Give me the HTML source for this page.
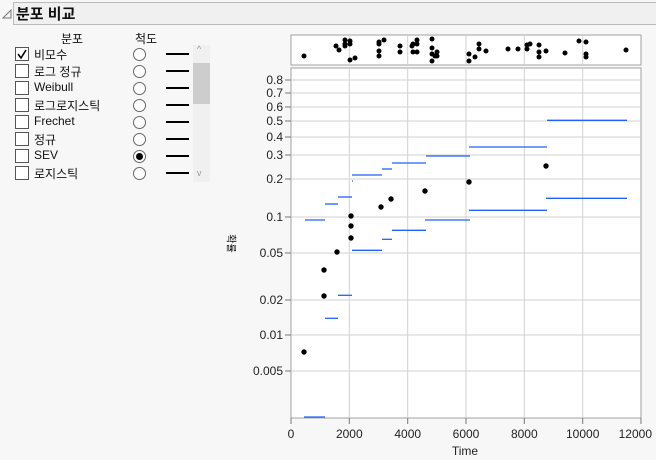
<!DOCTYPE html>
<html><head><meta charset="utf-8"><style>
body{margin:0;width:656px;height:460px;background:#f7f7f7;font-family:"Liberation Sans","Noto Sans CJK KR",sans-serif;overflow:hidden;position:relative}
.t{position:absolute;font-size:12px;color:#111;white-space:nowrap}
.cb{position:absolute;left:15px;width:12px;height:12px;border:1px solid #555;background:#fff}
.rd{position:absolute;left:133px;width:11px;height:11px;border:1px solid #666;border-radius:50%;background:#fff}
.ln{position:absolute;left:166px;width:23px;height:2px;background:#000}
</style></head><body>
<div style="position:absolute;left:13px;top:2px;width:660px;height:21px;border:1px solid #bbb;background:#f0f0f0"></div>
<svg style="position:absolute;left:2px;top:9px" width="10" height="10"><path d="M1 9 L9 9 L9 1 Z" fill="none" stroke="#777"/></svg>
<div class="t" style="left:16px;top:3px;font-size:15px;font-weight:bold">분포 비교</div>
<div class="t" style="left:61px;top:30px">분포</div>
<div class="t" style="left:135px;top:30px">척도</div>

<div class="cb" style="top:47px"></div><svg style="position:absolute;left:16px;top:48px" width="12" height="12"><path d="M2 6 L5 10 L10 2" fill="none" stroke="#000" stroke-width="1.6"/></svg>
<div class="t" style="left:34px;top:46px">비모수</div>
<div class="cb" style="top:64px"></div><div class="t" style="left:34px;top:63px">로그 정규</div>
<div class="cb" style="top:81px"></div><div class="t" style="left:34px;top:80px">Weibull</div>
<div class="cb" style="top:98px"></div><div class="t" style="left:34px;top:97px">로그로지스틱</div>
<div class="cb" style="top:115px"></div><div class="t" style="left:34px;top:114px">Frechet</div>
<div class="cb" style="top:132px"></div><div class="t" style="left:34px;top:131px">정규</div>
<div class="cb" style="top:149px"></div><div class="t" style="left:34px;top:148px">SEV</div>
<div class="cb" style="top:166px"></div><div class="t" style="left:34px;top:165px">로지스틱</div>

<div class="rd" style="top:48px"></div><div class="rd" style="top:65px"></div><div class="rd" style="top:82px"></div><div class="rd" style="top:99px"></div><div class="rd" style="top:116px"></div><div class="rd" style="top:133px"></div><div class="rd" style="top:150px"></div><div class="rd" style="top:167px"></div>
<div style="position:absolute;left:136px;top:153px;width:7px;height:7px;border-radius:50%;background:#000"></div>
<div class="ln" style="top:53px"></div><div class="ln" style="top:70px"></div><div class="ln" style="top:87px"></div><div class="ln" style="top:104px"></div><div class="ln" style="top:121px"></div><div class="ln" style="top:138px"></div><div class="ln" style="top:155px"></div><div class="ln" style="top:172px"></div>
<div style="position:absolute;left:193px;top:45px;width:17px;height:137px;background:#f0f0f0"></div>
<div style="position:absolute;left:193px;top:63px;width:17px;height:41px;background:#cdcdcd"></div>
<div class="t" style="left:197px;top:44px;font-size:9px;color:#999">^</div>
<div class="t" style="left:197px;top:168px;font-size:9px;color:#999">v</div>

<div class="t" style="left:223px;top:236px;transform:rotate(90deg);font-size:10px">확률</div>

<svg style="position:absolute;left:0;top:0" width="656" height="460" font-family="Liberation Sans" font-size="12">
<rect x="291" y="35" width="350" height="30" fill="#fff" stroke="#a0a0a0"/>
<rect x="291" y="68" width="350" height="350" fill="#fff" stroke="#a0a0a0"/>
<g stroke="#d0d0d0">
<line x1="349.3" y1="35" x2="349.3" y2="65"/><line x1="407.7" y1="35" x2="407.7" y2="65"/><line x1="466" y1="35" x2="466" y2="65"/><line x1="524.3" y1="35" x2="524.3" y2="65"/><line x1="582.7" y1="35" x2="582.7" y2="65"/>
<line x1="349.3" y1="68" x2="349.3" y2="418"/><line x1="407.7" y1="68" x2="407.7" y2="418"/><line x1="466" y1="68" x2="466" y2="418"/><line x1="524.3" y1="68" x2="524.3" y2="418"/><line x1="582.7" y1="68" x2="582.7" y2="418"/>
<line x1="291" y1="80" x2="641" y2="80"/><line x1="291" y1="93" x2="641" y2="93"/><line x1="291" y1="107" x2="641" y2="107"/><line x1="291" y1="121" x2="641" y2="121"/><line x1="291" y1="137" x2="641" y2="137"/><line x1="291" y1="155" x2="641" y2="155"/><line x1="291" y1="179" x2="641" y2="179"/><line x1="291" y1="217" x2="641" y2="217"/><line x1="291" y1="253" x2="641" y2="253"/><line x1="291" y1="300" x2="641" y2="300"/><line x1="291" y1="335" x2="641" y2="335"/><line x1="291" y1="371" x2="641" y2="371"/>
</g>
<g stroke="#777"><line x1="285" y1="80" x2="291" y2="80"/><line x1="285" y1="93" x2="291" y2="93"/><line x1="285" y1="107" x2="291" y2="107"/><line x1="285" y1="121" x2="291" y2="121"/><line x1="285" y1="137" x2="291" y2="137"/><line x1="285" y1="155" x2="291" y2="155"/><line x1="285" y1="179" x2="291" y2="179"/><line x1="285" y1="217" x2="291" y2="217"/><line x1="285" y1="253" x2="291" y2="253"/><line x1="285" y1="300" x2="291" y2="300"/><line x1="285" y1="335" x2="291" y2="335"/><line x1="285" y1="371" x2="291" y2="371"/>
<line x1="291" y1="418" x2="291" y2="424"/><line x1="349.3" y1="418" x2="349.3" y2="424"/><line x1="407.7" y1="418" x2="407.7" y2="424"/><line x1="466" y1="418" x2="466" y2="424"/><line x1="524.3" y1="418" x2="524.3" y2="424"/><line x1="582.7" y1="418" x2="582.7" y2="424"/><line x1="641" y1="418" x2="641" y2="424"/></g>
<g text-anchor="end" fill="#222"><text x="283" y="84">0.8</text><text x="283" y="97">0.7</text><text x="283" y="111">0.6</text><text x="283" y="125">0.5</text><text x="283" y="141">0.4</text><text x="283" y="159">0.3</text><text x="283" y="183">0.2</text><text x="283" y="221">0.1</text><text x="283" y="257">0.05</text><text x="283" y="304">0.02</text><text x="283" y="339">0.01</text><text x="283" y="375">0.005</text></g>
<g text-anchor="middle" fill="#222"><text x="291" y="438">0</text><text x="349.3" y="438">2000</text><text x="407.7" y="438">4000</text><text x="466" y="438">6000</text><text x="524.3" y="438">8000</text><text x="582.7" y="438">10000</text><text x="652" y="438" text-anchor="end">12000</text><text x="465" y="455">Time</text></g>
<g stroke="#2060ff" stroke-width="1.3">
<line x1="547" y1="120.3" x2="627" y2="120.3"/><line x1="469" y1="147" x2="547" y2="147"/><line x1="426" y1="156" x2="470" y2="156"/><line x1="392" y1="163" x2="426" y2="163"/><line x1="382" y1="169" x2="392" y2="169"/><line x1="352" y1="175" x2="382" y2="175"/><line x1="352" y1="181" x2="353" y2="181"/><line x1="338" y1="197" x2="352" y2="197"/><line x1="325" y1="204" x2="338" y2="204"/><line x1="546" y1="198.3" x2="627" y2="198.3"/><line x1="469" y1="210.3" x2="547" y2="210.3"/><line x1="305" y1="220" x2="325" y2="220"/><line x1="425" y1="220" x2="470" y2="220"/><line x1="392" y1="230.3" x2="426" y2="230.3"/><line x1="382" y1="239.3" x2="392" y2="239.3"/><line x1="352" y1="250.3" x2="382" y2="250.3"/><line x1="338" y1="295.3" x2="352" y2="295.3"/><line x1="325" y1="318.3" x2="338" y2="318.3"/><line x1="304" y1="417" x2="325" y2="417"/>
</g>
<g fill="#000">
<circle cx="304" cy="352" r="2.7"/><circle cx="324" cy="270" r="2.7"/><circle cx="324" cy="296" r="2.7"/><circle cx="337" cy="252" r="2.7"/><circle cx="351" cy="216" r="2.7"/><circle cx="351" cy="226" r="2.7"/><circle cx="351" cy="238" r="2.7"/><circle cx="381" cy="207" r="2.7"/><circle cx="391" cy="199" r="2.7"/><circle cx="425" cy="191" r="2.7"/><circle cx="469" cy="182" r="2.7"/><circle cx="546" cy="166" r="2.7"/>
<circle cx="304" cy="56" r="2.5"/><circle cx="336" cy="46" r="2.5"/><circle cx="339" cy="50" r="2.5"/><circle cx="345" cy="40" r="2.5"/><circle cx="345" cy="44" r="2.5"/><circle cx="345" cy="46" r="2.5"/><circle cx="350" cy="41" r="2.5"/><circle cx="350" cy="44" r="2.5"/><circle cx="350" cy="60" r="2.5"/><circle cx="355" cy="58" r="2.5"/><circle cx="379" cy="42" r="2.5"/><circle cx="379" cy="44" r="2.5"/><circle cx="379" cy="51" r="2.5"/><circle cx="379" cy="56" r="2.5"/><circle cx="384" cy="40" r="2.5"/><circle cx="400" cy="46" r="2.5"/><circle cx="400" cy="52" r="2.5"/><circle cx="412" cy="46" r="2.5"/><circle cx="413" cy="44" r="2.5"/><circle cx="417" cy="40" r="2.5"/><circle cx="417" cy="44" r="2.5"/><circle cx="413" cy="52" r="2.5"/><circle cx="417" cy="52" r="2.5"/><circle cx="432" cy="39" r="2.5"/><circle cx="432" cy="48" r="2.5"/><circle cx="432" cy="54" r="2.5"/><circle cx="432" cy="61" r="2.5"/><circle cx="437" cy="52" r="2.5"/><circle cx="437" cy="56" r="2.5"/><circle cx="435" cy="56" r="2.5"/><circle cx="469" cy="54" r="2.5"/><circle cx="469" cy="61" r="2.5"/><circle cx="475" cy="57" r="2.5"/><circle cx="479" cy="44" r="2.5"/><circle cx="479" cy="49" r="2.5"/><circle cx="486" cy="51" r="2.5"/><circle cx="508" cy="49" r="2.5"/><circle cx="518" cy="49" r="2.5"/><circle cx="527" cy="45" r="2.5"/><circle cx="530" cy="44" r="2.5"/><circle cx="527" cy="49" r="2.5"/><circle cx="539" cy="45" r="2.5"/><circle cx="539" cy="52" r="2.5"/><circle cx="539" cy="57" r="2.5"/><circle cx="546" cy="51" r="2.5"/><circle cx="565" cy="53" r="2.5"/><circle cx="579" cy="41" r="2.5"/><circle cx="586" cy="42" r="2.5"/><circle cx="586" cy="54" r="2.5"/><circle cx="586" cy="57" r="2.5"/><circle cx="626" cy="50" r="2.5"/>
</g>
</svg>
</body></html>
